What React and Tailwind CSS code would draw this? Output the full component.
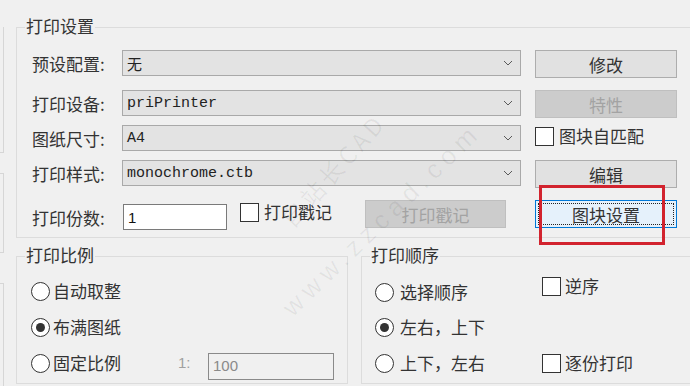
import React from "react";

const F = "font-['Noto_Sans_CJK_SC','Noto_Sans_CJK_JP',sans-serif]";
const MONO = "font-['Liberation_Mono',monospace]";

function Chevron() {
  return (
    <svg width="10" height="6" viewBox="0 0 10 6">
      <polyline points="1,1 5,5 9,1" fill="none" stroke="#5a5a5a" strokeWidth="1" />
    </svg>
  );
}

function Select({ children, mono = true }) {
  return (
    <div className="w-[399px] h-[26px] bg-[#e3e3e3] border border-[#a9a9a9] flex items-center justify-between pl-[4px] pr-[7px]">
      <span className={`${mono ? MONO : F} text-[15px] text-[#222] leading-none`}>{children}</span>
      <Chevron />
    </div>
  );
}

function Btn({ children, disabled = false, width = "w-[142px]" }) {
  return (
    <div
      className={`${width} h-[28px] flex items-center justify-center border ${
        disabled ? "bg-[#cccccc] border-[#bfbfbf] text-[#a3a3a3]" : "bg-[#e1e1e1] border-[#adadad] text-[#333]"
      } text-[17px] leading-none`}
    >
      {children}
    </div>
  );
}

function Check() {
  return <span className="w-[19px] h-[19px] border border-[#333] bg-white shrink-0" />;
}

function Radio({ checked = false }) {
  return (
    <span className="w-[19px] h-[19px] rounded-full border border-[#333] bg-white flex items-center justify-center shrink-0">
      {checked && <span className="w-[9px] h-[9px] rounded-full bg-[#333]" />}
    </span>
  );
}

function Label({ children }) {
  return <div className="w-[90px] h-[26px] flex items-center text-[17px] text-[#333] leading-none">{children}</div>;
}

export default function App() {
  return (
    <div className={`${F} relative w-[690px] h-[386px] bg-[#f0f0f0] overflow-hidden flex text-[#333]`}>
      {/* left strip with partial group borders */}
      <div className="w-[4px] flex flex-col shrink-0">
        <div className="mt-[27px] h-[126px] border-r border-b border-[#d6d6d6]" />
        <div className="mt-[20px] h-[80px] border-r border-t border-b border-[#d6d6d6]" />
        <div className="mt-[30px] flex-1 border-r border-t border-[#d6d6d6]" />
      </div>

      <div className="ml-[12px] flex-1 flex flex-col">
        {/* 打印设置 */}
        <div className="relative mt-[27px] border-t border-l border-b border-[#dcdcdc] pl-[15px] pt-[22px] pb-[7px]">
          <div className="absolute -top-[12px] left-[8px] px-[1px] bg-[#f0f0f0] text-[17px] leading-[20px] text-[#333]">打印设置</div>

          <div className="flex items-start h-[28px]">
            <Label>预设配置:</Label>
            <Select mono={false}>无</Select>
            <div className="ml-[14px]"><Btn>修改</Btn></div>
          </div>

          <div className="flex items-start h-[28px] mt-[12px]">
            <Label>打印设备:</Label>
            <Select>priPrinter</Select>
            <div className="ml-[14px]"><Btn disabled>特性</Btn></div>
          </div>

          <div className="flex items-start h-[28px] mt-[7px]">
            <Label>图纸尺寸:</Label>
            <Select>A4</Select>
            <div className="ml-[14px] mt-[1px] flex items-center gap-[5px]">
              <Check />
              <span className="text-[17px] leading-[20px]">图块自匹配</span>
            </div>
          </div>

          <div className="flex items-start h-[28px] mt-[7px]">
            <Label>打印样式:</Label>
            <Select>monochrome.ctb</Select>
            <div className="ml-[14px]"><Btn>编辑</Btn></div>
          </div>

          <div className="flex items-start h-[30px] mt-[12px]">
            <div className="w-[333px] flex items-start">
              <div className="mt-[4px]"><Label>打印份数:</Label></div>
              <div className="ml-[1px] mt-[4px] w-[104px] h-[26px] bg-white border border-[#7a7a7a] flex items-center pl-[4px]">
                <span className="font-['Liberation_Sans',sans-serif] text-[15px] leading-none text-[#111]">1</span>
              </div>
              <div className="ml-[13px] mt-[2px] flex items-center gap-[5px]">
                <Check />
                <span className="text-[17px] leading-[20px]">打印戳记</span>
              </div>
            </div>
            <Btn disabled width="w-[141px]">打印戳记</Btn>
            <div className="ml-[29px] relative w-[142px] h-[28px] bg-[#e5f1fb] border border-[#0078d7] flex items-center justify-center text-[17px] leading-none text-[#333]">
              <div className="absolute inset-[2px] border border-dotted border-[#222]" />
              图块设置
            </div>
          </div>
        </div>

        {/* lower groups */}
        <div className="flex mt-[18px]">
          <div className="relative w-[332px] h-[128px] border border-[#dcdcdc] pl-[14px] pt-[24px]">
            <div className="absolute -top-[12px] left-[8px] px-[1px] bg-[#f0f0f0] text-[17px] leading-[20px]">打印比例</div>
            <div className="flex items-center h-[20px] gap-[3px]">
              <Radio />
              <span className="text-[17px] leading-[20px]">自动取整</span>
            </div>
            <div className="flex items-center h-[20px] gap-[3px] mt-[16px]">
              <Radio checked />
              <span className="text-[17px] leading-[20px]">布满图纸</span>
            </div>
            <div className="flex items-start mt-[16px]">
              <div className="w-[147px] flex items-center h-[20px] gap-[3px]">
                <Radio />
                <span className="text-[17px] leading-[20px]">固定比例</span>
              </div>
              <div className="w-[30px] h-[20px] flex items-center font-['Liberation_Sans',sans-serif] text-[15px] text-[#a0a0a0]">1:</div>
              <div className="w-[126px] h-[27px] border border-[#8a8a8a] flex items-center pl-[4px] font-['Liberation_Sans',sans-serif] text-[15px] text-[#8a8a8a]">100</div>
            </div>
          </div>

          <div className="relative ml-[13px] flex-1 h-[128px] border-t border-l border-b border-[#dcdcdc] pl-[13px] pt-[19px]">
            <div className="absolute -top-[12px] left-[8px] px-[1px] bg-[#f0f0f0] text-[17px] leading-[20px]">打印顺序</div>
            <div className="flex items-start h-[26px]">
              <div className="w-[167px] mt-[6px] flex items-center h-[20px] gap-[6px]">
                <Radio />
                <span className="text-[17px] leading-[20px]">选择顺序</span>
              </div>
              <div className="flex items-center gap-[4px]">
                <Check />
                <span className="text-[17px] leading-[20px]">逆序</span>
              </div>
            </div>
            <div className="flex items-center h-[20px] gap-[6px] mt-[15px]">
              <Radio checked />
              <span className="text-[17px] leading-[20px]">左右，上下</span>
            </div>
            <div className="flex items-start mt-[16px]">
              <div className="w-[167px] flex items-center h-[20px] gap-[6px]">
                <Radio />
                <span className="text-[17px] leading-[20px]">上下，左右</span>
              </div>
              <div className="flex items-center gap-[4px]">
                <Check />
                <span className="text-[17px] leading-[20px]">逐份打印</span>
              </div>
            </div>
          </div>
        </div>
      </div>

      {/* red highlight box */}
      <div className="absolute left-[539px] top-[185px] w-[126px] h-[60px] border-[3px] border-[#d2232e] pointer-events-none" />

      {/* watermark */}
      <div className="absolute left-[258px] top-[158px] w-[150px] text-center -rotate-[48deg] text-[24px] leading-none tracking-[4px] text-black/[0.06] pointer-events-none whitespace-nowrap">
        自站长CAD
      </div>
      <div className="absolute left-[250px] top-[208px] w-[260px] text-center -rotate-[44deg] font-['Liberation_Sans',sans-serif] text-[26px] leading-none tracking-[6px] text-black/[0.06] pointer-events-none whitespace-nowrap">
        www.zzcad.com
      </div>
    </div>
  );
}
